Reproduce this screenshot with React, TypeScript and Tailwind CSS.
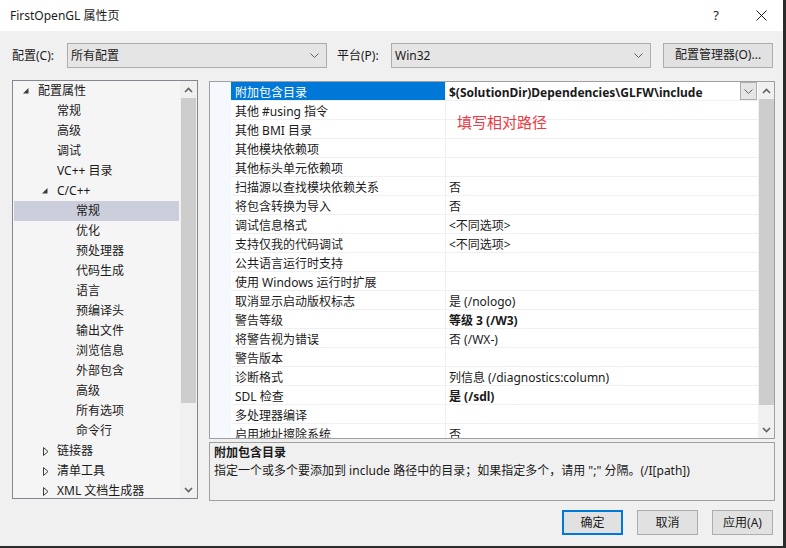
import React from 'react';

type TreeItem = { label: string; level: number; toggle?: 'open' | 'closed'; selected?: boolean };

const treeItems: TreeItem[] = [
  { label: '配置属性', level: 0, toggle: 'open' },
  { label: '常规', level: 1 },
  { label: '高级', level: 1 },
  { label: '调试', level: 1 },
  { label: 'VC++ 目录', level: 1 },
  { label: 'C/C++', level: 1, toggle: 'open' },
  { label: '常规', level: 2, selected: true },
  { label: '优化', level: 2 },
  { label: '预处理器', level: 2 },
  { label: '代码生成', level: 2 },
  { label: '语言', level: 2 },
  { label: '预编译头', level: 2 },
  { label: '输出文件', level: 2 },
  { label: '浏览信息', level: 2 },
  { label: '外部包含', level: 2 },
  { label: '高级', level: 2 },
  { label: '所有选项', level: 2 },
  { label: '命令行', level: 2 },
  { label: '链接器', level: 1, toggle: 'closed' },
  { label: '清单工具', level: 1, toggle: 'closed' },
  { label: 'XML 文档生成器', level: 1, toggle: 'closed' },
];

const props: [string, string, boolean?][] = [
  ['附加包含目录', '$(SolutionDir)Dependencies\\GLFW\\include', true],
  ['其他 #using 指令', ''],
  ['其他 BMI 目录', ''],
  ['其他模块依赖项', ''],
  ['其他标头单元依赖项', ''],
  ['扫描源以查找模块依赖关系', '否'],
  ['将包含转换为导入', '否'],
  ['调试信息格式', '<不同选项>'],
  ['支持仅我的代码调试', '<不同选项>'],
  ['公共语言运行时支持', ''],
  ['使用 Windows 运行时扩展', ''],
  ['取消显示启动版权标志', '是 (/nologo)'],
  ['警告等级', '等级 3 (/W3)', true],
  ['将警告视为错误', '否 (/WX-)'],
  ['警告版本', ''],
  ['诊断格式', '列信息 (/diagnostics:column)'],
  ['SDL 检查', '是 (/sdl)', true],
  ['多处理器编译', ''],
  ['启用地址擦除系统', '否'],
];

const padByLevel = ['pl-[10px]', 'pl-[29px]', 'pl-[48px]'];

const ComboChevron = () => (
  <svg width="9" height="5" viewBox="0 0 9 5" className="text-[#606060]">
    <path d="M0.5 0.5 L4.5 4.5 L8.5 0.5" fill="none" stroke="currentColor" strokeWidth="1" />
  </svg>
);

const ScrollArrow = ({ up }: { up?: boolean }) => (
  <svg width="9" height="6" viewBox="0 0 9 6" className="text-[#606060]">
    <path d={up ? 'M1 5 L4.5 1.5 L8 5' : 'M1 1 L4.5 4.5 L8 1'} fill="none" stroke="currentColor" strokeWidth="1.6" />
  </svg>
);

const Toggle = ({ kind }: { kind?: 'open' | 'closed' }) => {
  if (kind === 'open')
    return (
      <svg width="6" height="6" viewBox="0 0 6 6">
        <polygon points="5.5,0 5.5,5.5 0,5.5" fill="#3c3c3c" />
      </svg>
    );
  if (kind === 'closed')
    return (
      <svg width="6" height="9" viewBox="0 0 6 9" className="ml-[1px]">
        <polygon points="0.5,0.5 5,4.5 0.5,8.5" fill="none" stroke="#3c3c3c" strokeWidth="1" />
      </svg>
    );
  return null;
};

const Combo = ({ text }: { text: string }) => (
  <div className="w-[260px] h-[25px] bg-[#e5e5e5] border border-[#adadad] flex items-center pl-[3px] pr-[7px]">
    <span className="flex-1">{text}</span>
    <ComboChevron />
  </div>
);

export default function App() {
  return (
    <div className="w-[786px] h-[548px] bg-[#f0f0f0] border-r-[3px] border-b-2 border-[#2b2b2b] flex flex-col overflow-hidden text-[12px] text-[#1a1a1a] font-['Noto_Sans','Noto_Sans_CJK_SC',sans-serif]">
      {/* title bar */}
      <div className="h-[31px] bg-white flex items-center pl-[10px] shrink-0">
        <span className="leading-[16px]">FirstOpenGL 属性页</span>
        <span className="ml-auto w-[46px] text-center text-[13px]">?</span>
        <span className="w-[44px] flex justify-center">
          <svg width="11" height="11" viewBox="0 0 11 11">
            <path d="M0.5 0.5 L10.5 10.5 M10.5 0.5 L0.5 10.5" stroke="#1a1a1a" strokeWidth="1" />
          </svg>
        </span>
      </div>

      {/* config row */}
      <div className="mt-[12px] h-[25px] flex items-center pl-[12px]">
        <span className="w-[55px]">配置(C):</span>
        <Combo text="所有配置" />
        <span className="ml-[10px] w-[54px]">平台(P):</span>
        <Combo text="Win32" />
        <button className="ml-[12px] w-[110px] h-[25px] -mt-[1px] bg-[#e1e1e1] border border-[#adadad] text-center">
          配置管理器(O)...
        </button>
      </div>

      {/* main area */}
      <div className="mt-[12px] flex pl-[12px] gap-[11px]">
        {/* tree */}
        <div className="w-[186px] h-[419px] border border-[#828790] bg-[#f5f5f5] flex">
          <div className="flex-1 flex flex-col">
            {treeItems.map((t, i) => (
              <div
                key={i}
                className={`h-[20px] flex items-center ${padByLevel[t.level]} ${t.selected ? 'bg-[#cccedb] mx-[1px]' : ''}`}
              >
                <span className={`w-[15px] flex items-center ${t.selected ? '-ml-[1px]' : ''}`}>
                  <Toggle kind={t.toggle} />
                </span>
                <span className="leading-[20px] whitespace-nowrap">{t.label}</span>
              </div>
            ))}
          </div>
          <div className="w-[17px] bg-[#f0f0f0] flex flex-col items-center">
            <div className="h-[17px] flex items-center justify-center">
              <ScrollArrow up />
            </div>
            <div className="w-[15px] h-[305px] bg-[#cdcdcd]" />
            <div className="flex-1" />
            <div className="h-[17px] flex items-center justify-center">
              <ScrollArrow />
            </div>
          </div>
        </div>

        {/* right column */}
        <div className="w-[566px] flex flex-col">
          <div className="mt-[1px] h-[358px] border border-[#a0a0a0] bg-white flex overflow-hidden">
            <div className="w-[21px] bg-[#f5f8fc]" />
            <div className="w-[527px] relative flex flex-col">
              {props.map(([name, value, bold], i) => (
                <div key={i} className="h-[19px] shrink-0 flex border-b border-[#eef0f3]">
                  <div
                    className={`w-[215px] pl-[4px] leading-[21px] border-r border-[#eef0f3] whitespace-nowrap ${
                      i === 0 ? 'bg-[#0078d7] text-white' : ''
                    }`}
                  >
                    {name}
                  </div>
                  <div className={`flex-1 pl-[3px] leading-[21px] whitespace-nowrap flex ${bold ? 'font-bold' : ''}`}>
                    <span className="flex-1">{value}</span>
                    {i === 0 && (
                      <span className="w-[17px] h-[18px] bg-[#e5e5e5] border border-[#adadad] flex items-center justify-center mr-[1px]">
                        <ComboChevron />
                      </span>
                    )}
                  </div>
                </div>
              ))}
              <div className="absolute left-[226px] top-[30px] text-[15px] leading-[20px] text-[#ef3a43]">
                填写相对路径
              </div>
            </div>
            <div className="w-[16px] bg-[#f0f0f0] flex flex-col items-center">
              <div className="h-[17px] flex items-center justify-center">
                <ScrollArrow up />
              </div>
              <div className="w-[15px] h-[306px] bg-[#cdcdcd]" />
              <div className="flex-1" />
              <div className="h-[17px] flex items-center justify-center">
                <ScrollArrow />
              </div>
            </div>
          </div>

          <div className="mt-[3px] h-[59px] border border-[#a0a0a0] pl-[4px] pt-[1px]">
            <div className="font-bold leading-[18px]">附加包含目录</div>
            <div className="leading-[18px] whitespace-nowrap">
              指定一个或多个要添加到 include 路径中的目录；如果指定多个，请用 ";" 分隔。(/I[path])
            </div>
          </div>
        </div>
      </div>

      {/* buttons */}
      <div className="mt-[9px] h-[25px] flex justify-end gap-[14px] pr-[10px]">
        <button className="w-[61px] h-[25px] bg-[#e1e1e1] border-2 border-[#0078d7]">确定</button>
        <button className="w-[61px] h-[25px] bg-[#e1e1e1] border border-[#adadad]">取消</button>
        <button className="w-[61px] h-[25px] bg-[#e1e1e1] border border-[#adadad]">应用(A)</button>
      </div>
    </div>
  );
}
